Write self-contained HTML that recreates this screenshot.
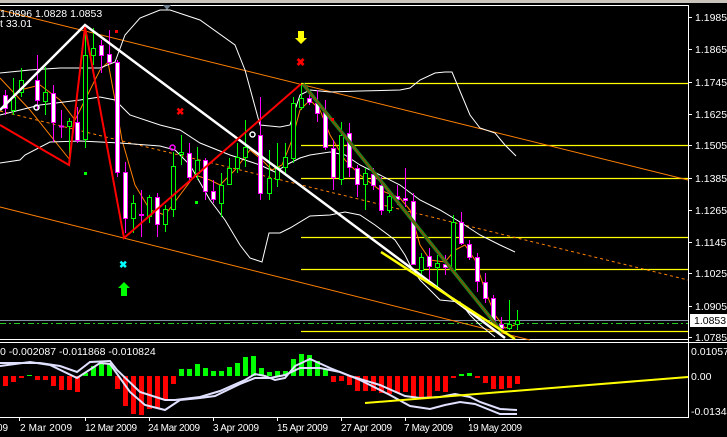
<!DOCTYPE html>
<html><head><meta charset="utf-8"><style>
html,body{margin:0;padding:0;background:#000;}
body{width:727px;height:437px;overflow:hidden;position:relative;font-family:"Liberation Sans",sans-serif;}
svg{position:absolute;left:0;top:0;}
text{font-family:"Liberation Sans",sans-serif;font-size:10.5px;fill:#fff;}
</style></head><body>
<svg width="727" height="437" viewBox="0 0 727 437" xmlns="http://www.w3.org/2000/svg">
<rect width="727" height="437" fill="#000"/>
<rect x="0" y="0" width="727" height="3" fill="#c8c4bc"/>
<line x1="0" y1="5.5" x2="688" y2="5.5" stroke="#fff"/>
<line x1="688.5" y1="5" x2="688.5" y2="418" stroke="#fff"/>
<line x1="0" y1="339.5" x2="688" y2="339.5" stroke="#fff"/>
<line x1="0" y1="342.5" x2="727" y2="342.5" stroke="#fff"/>
<line x1="0" y1="417.5" x2="688" y2="417.5" stroke="#fff"/>
<polygon points="163,5 171,5 167,10" fill="#708090"/>

<g stroke="#ffff00" stroke-width="1.2">
<line x1="301" y1="83.5" x2="688" y2="83.5"/>
<line x1="301" y1="145.5" x2="688" y2="145.5"/>
<line x1="301" y1="178.5" x2="688" y2="178.5"/>
<line x1="301" y1="237.5" x2="688" y2="237.5"/>
<line x1="301" y1="269.5" x2="688" y2="269.5"/>
<line x1="301" y1="331.5" x2="688" y2="331.5"/>
</g>
<line x1="0" y1="320.5" x2="688" y2="320.5" stroke="#8090a0"/>
<line x1="0" y1="323.5" x2="688" y2="323.5" stroke="#22cc22" stroke-dasharray="6,3,2,3"/>

<g stroke="#ff8000" stroke-width="1" fill="none">
<line x1="0" y1="10" x2="688" y2="180"/>
<line x1="0" y1="207" x2="530" y2="340"/>
<line x1="0" y1="111" x2="688" y2="280" stroke-dasharray="3,3"/>
<polyline points="0,78 30,110 70,160"/>
<polyline points="0,110 20,90 40,85 60,100 75,120 85,100 100,70 108,62 115,100 122,140 135,185 150,210 165,215 180,195 195,175 210,180 220,185 235,170 250,150 262,160 272,170 282,165 292,140 300,110 310,100 320,110 330,135 345,160 360,175 380,190 400,198 410,210 420,245 430,260 445,262 455,250 465,245 475,260 485,290 495,315 505,328 515,325"/>
</g>

<g stroke="#fff" stroke-width="1" fill="none">
<polyline points="0,73 30,70 60,68 100,68 115,62 125,35 140,18 160,10 170,10 200,20 235,45 245,70 260,125 280,127 290,125 300,95 310,90 330,92 360,91 400,90 410,88 420,80 435,73 445,72 452,72 470,115 480,128 495,133 505,145 516,156"/>
<polyline points="0,115 20,110 40,105 80,100 100,97 115,100 130,115 160,125 180,130 200,143 230,155 260,165 275,172 290,163 300,158 310,155 330,152 345,155 360,165 380,175 400,185 420,200 440,210 460,222 480,235 500,245 515,252"/>
<polyline points="0,163 20,160 25,155 50,142 80,141 100,142 120,143 160,146 175,150 190,165 210,200 225,220 240,245 250,258 262,262 269,233 280,233 290,228 310,216 330,215 345,212 360,215 375,225 395,240 405,255 410,265 420,280 440,300 460,302 470,315 480,325 495,337"/>
</g>

<g stroke-width="1">
<g stroke="#ff00ff">
<line x1="5.5" y1="90" x2="5.5" y2="115"/><line x1="37.5" y1="55" x2="37.5" y2="110"/><line x1="53.5" y1="85" x2="53.5" y2="142"/><line x1="61.5" y1="110" x2="61.5" y2="138"/><line x1="77.5" y1="107" x2="77.5" y2="143"/><line x1="101.5" y1="40" x2="101.5" y2="73"/><line x1="109.5" y1="30" x2="109.5" y2="65"/><line x1="117.5" y1="60" x2="117.5" y2="177"/><line x1="125.5" y1="162" x2="125.5" y2="233"/><line x1="141.5" y1="190" x2="141.5" y2="237"/><line x1="157.5" y1="193" x2="157.5" y2="237"/><line x1="189.5" y1="143" x2="189.5" y2="183"/><line x1="205.5" y1="158" x2="205.5" y2="200"/><line x1="213.5" y1="180" x2="213.5" y2="203"/><line x1="260.5" y1="97" x2="260.5" y2="200"/><line x1="309.5" y1="92" x2="309.5" y2="105"/><line x1="317.5" y1="90" x2="317.5" y2="122"/><line x1="325.5" y1="100" x2="325.5" y2="150"/><line x1="333.5" y1="140" x2="333.5" y2="190"/><line x1="349.5" y1="123" x2="349.5" y2="177"/><line x1="357.5" y1="165" x2="357.5" y2="197"/><line x1="373.5" y1="168" x2="373.5" y2="190"/><line x1="381.5" y1="177" x2="381.5" y2="215"/><line x1="397.5" y1="185" x2="397.5" y2="205"/><line x1="405.5" y1="168" x2="405.5" y2="207"/><line x1="413.5" y1="193" x2="413.5" y2="265"/><line x1="429.5" y1="248" x2="429.5" y2="280"/><line x1="445.5" y1="255" x2="445.5" y2="275"/><line x1="461.5" y1="212" x2="461.5" y2="245"/><line x1="469.5" y1="240" x2="469.5" y2="260"/><line x1="477.5" y1="253" x2="477.5" y2="292"/><line x1="485.5" y1="273" x2="485.5" y2="303"/><line x1="493.5" y1="295" x2="493.5" y2="326"/><line x1="501.5" y1="317" x2="501.5" y2="332"/>
</g>
<g stroke="#00ff00">
<line x1="13.5" y1="78" x2="13.5" y2="115"/><line x1="21.5" y1="68" x2="21.5" y2="97"/><line x1="45.5" y1="67" x2="45.5" y2="115"/><line x1="69.5" y1="118" x2="69.5" y2="158"/><line x1="85.5" y1="27" x2="85.5" y2="148"/><line x1="93.5" y1="28" x2="93.5" y2="65"/><line x1="133.5" y1="195" x2="133.5" y2="233"/><line x1="149.5" y1="195" x2="149.5" y2="223"/><line x1="165.5" y1="205" x2="165.5" y2="232"/><line x1="173.5" y1="152" x2="173.5" y2="217"/><line x1="181.5" y1="135" x2="181.5" y2="165"/><line x1="197.5" y1="147" x2="197.5" y2="180"/><line x1="221.5" y1="173" x2="221.5" y2="217"/><line x1="229.5" y1="158" x2="229.5" y2="185"/><line x1="237.5" y1="143" x2="237.5" y2="173"/><line x1="245.5" y1="120" x2="245.5" y2="167"/><line x1="269.5" y1="150" x2="269.5" y2="200"/><line x1="277.5" y1="143" x2="277.5" y2="187"/><line x1="285.5" y1="143" x2="285.5" y2="173"/><line x1="293.5" y1="97" x2="293.5" y2="163"/><line x1="301.5" y1="85" x2="301.5" y2="110"/><line x1="341.5" y1="122" x2="341.5" y2="185"/><line x1="365.5" y1="168" x2="365.5" y2="210"/><line x1="389.5" y1="190" x2="389.5" y2="213"/><line x1="421.5" y1="253" x2="421.5" y2="280"/><line x1="437.5" y1="255" x2="437.5" y2="287"/><line x1="453.5" y1="215" x2="453.5" y2="272"/><line x1="509.5" y1="300" x2="509.5" y2="330"/><line x1="517.5" y1="310" x2="517.5" y2="330"/>
</g>
<g fill="#fff" stroke="#ff00ff">
<rect x="3.5" y="95.5" width="4" height="13"/><rect x="35.5" y="80.5" width="4" height="20"/><rect x="51.5" y="93.5" width="4" height="29"/><rect x="59.5" y="126" width="4" height="1"/><rect x="75.5" y="122.5" width="4" height="18"/><rect x="99.5" y="45.5" width="4" height="10"/><rect x="107.5" y="54.5" width="4" height="8"/><rect x="115.5" y="62.5" width="4" height="110"/><rect x="123.5" y="172.5" width="4" height="46"/><rect x="139.5" y="214.5" width="4" height="1"/><rect x="155.5" y="197.5" width="4" height="27"/><rect x="187.5" y="153.5" width="4" height="24"/><rect x="203.5" y="160.5" width="4" height="31"/><rect x="211.5" y="191.5" width="4" height="8"/><rect x="258.5" y="135.5" width="4" height="58"/><rect x="307.5" y="98.5" width="4" height="4"/><rect x="315.5" y="103.5" width="4" height="10"/><rect x="323.5" y="112.5" width="4" height="35"/><rect x="331.5" y="148.5" width="4" height="29"/><rect x="347.5" y="133.5" width="4" height="34"/><rect x="355.5" y="168.5" width="4" height="16"/><rect x="371.5" y="174.5" width="4" height="11"/><rect x="379.5" y="185.5" width="4" height="25"/><rect x="395.5" y="196.5" width="4" height="3"/><rect x="403.5" y="198.5" width="4" height="2"/><rect x="411.5" y="201.5" width="4" height="63"/><rect x="427.5" y="256.5" width="4" height="10"/><rect x="443.5" y="264.5" width="4" height="3"/><rect x="459.5" y="222.5" width="4" height="21"/><rect x="467.5" y="244.5" width="4" height="13"/><rect x="475.5" y="257.5" width="4" height="24"/><rect x="483.5" y="282.5" width="4" height="16"/><rect x="491.5" y="298.5" width="4" height="24"/><rect x="499.5" y="324.5" width="4" height="4"/>
</g>
<g fill="#000" stroke="#00ff00">
<rect x="11.5" y="97.5" width="4" height="13"/><rect x="19.5" y="80.5" width="4" height="12"/><rect x="43.5" y="92.5" width="4" height="9"/><rect x="67.5" y="121.5" width="4" height="5"/><rect x="83.5" y="55.5" width="4" height="84"/><rect x="91.5" y="48.5" width="4" height="7"/><rect x="131.5" y="203.5" width="4" height="15"/><rect x="147.5" y="197.5" width="4" height="19"/><rect x="163.5" y="209.5" width="4" height="15"/><rect x="171.5" y="166.5" width="4" height="43"/><rect x="179.5" y="152.5" width="4" height="2"/><rect x="195.5" y="160.5" width="4" height="13"/><rect x="219.5" y="185.5" width="4" height="18"/><rect x="227.5" y="168.5" width="4" height="16"/><rect x="235.5" y="157.5" width="4" height="11"/><rect x="243.5" y="147.5" width="4" height="10"/><rect x="267.5" y="178.5" width="4" height="15"/><rect x="275.5" y="167.5" width="4" height="12"/><rect x="283.5" y="157.5" width="4" height="10"/><rect x="291.5" y="103.5" width="4" height="55"/><rect x="299.5" y="98.5" width="4" height="9"/><rect x="339.5" y="135.5" width="4" height="44"/><rect x="363.5" y="173.5" width="4" height="11"/><rect x="387.5" y="196.5" width="4" height="14"/><rect x="419.5" y="257.5" width="4" height="13"/><rect x="435.5" y="263.5" width="4" height="4"/><rect x="451.5" y="222.5" width="4" height="48"/><rect x="507.5" y="324.5" width="4" height="4"/><rect x="515.5" y="320.5" width="4" height="4"/>
</g>
</g>

<polyline points="0,110 85,25 505,338" stroke="#fff" stroke-width="2.5" fill="none"/>
<polyline points="0,125 69,165 85,27 124,238 301,84" stroke="#ff0000" stroke-width="2" fill="none"/>
<line x1="303" y1="84" x2="502" y2="332" stroke="#1a8a1a" stroke-width="3.5"/>
<line x1="303" y1="84" x2="502" y2="332" stroke="#cc2200" stroke-width="0.8"/>
<line x1="381" y1="252" x2="515" y2="339" stroke="#ffff00" stroke-width="2.5"/>

<polygon points="298,31 304,31 304,38 307,38 301,44 295,38 298,38" fill="#ffff00"/>
<text x="296" y="66" style="fill:#ff0000;font-size:11px;font-weight:bold">✖</text>
<text x="176" y="115" style="fill:#ff0000;font-size:10px;font-weight:bold">✖</text>
<text x="119" y="268" style="fill:#00ffff;font-size:10px;font-weight:bold">✖</text>
<polygon points="124,282 130,288 127,288 127,296 121,296 121,288 118,288" fill="#00ff00"/>
<rect x="115" y="30" width="3" height="3" fill="#ff0000"/>
<rect x="84" y="172" width="3" height="3" fill="#00ff00"/>
<rect x="195" y="201" width="3" height="3" fill="#00ff00"/>
<rect x="331" y="118" width="3" height="3" fill="#ff0000"/>
<circle cx="36.5" cy="107.5" r="2.5" stroke="#fff" stroke-width="1.5" fill="none"/>
<circle cx="252.5" cy="134.5" r="2.5" stroke="#fff" stroke-width="1.5" fill="none"/>
<circle cx="172.5" cy="147.5" r="2.5" stroke="#ff00ff" stroke-width="1.5" fill="none"/>

<text x="0" y="17">1.0896 1.0828 1.0853</text>
<text x="0" y="27">t 33.01</text>

<g>
<line x1="688" y1="17.5" x2="692" y2="17.5" stroke="#fff"/><text x="695" y="21">1.1985</text>
<line x1="688" y1="49.5" x2="692" y2="49.5" stroke="#fff"/><text x="695" y="53">1.1865</text>
<line x1="688" y1="82.5" x2="692" y2="82.5" stroke="#fff"/><text x="695" y="86">1.1745</text>
<line x1="688" y1="114.5" x2="692" y2="114.5" stroke="#fff"/><text x="695" y="118">1.1625</text>
<line x1="688" y1="145.5" x2="692" y2="145.5" stroke="#fff"/><text x="695" y="149">1.1505</text>
<line x1="688" y1="178.5" x2="692" y2="178.5" stroke="#fff"/><text x="695" y="182">1.1385</text>
<line x1="688" y1="210.5" x2="692" y2="210.5" stroke="#fff"/><text x="695" y="214">1.1265</text>
<line x1="688" y1="242.5" x2="692" y2="242.5" stroke="#fff"/><text x="695" y="246">1.1145</text>
<line x1="688" y1="273.5" x2="692" y2="273.5" stroke="#fff"/><text x="695" y="277">1.1025</text>
<line x1="688" y1="306.5" x2="692" y2="306.5" stroke="#fff"/><text x="695" y="310">1.0905</text>
<rect x="690" y="314" width="37" height="13" fill="#fff"/><text x="694" y="324" style="fill:#000">1.0853</text>
<line x1="688" y1="337.5" x2="692" y2="337.5" stroke="#fff"/><text x="695" y="341">1.0785</text>
<text x="691" y="355">0.010577</text>
<text x="691" y="380">0.00</text>
<text x="691" y="415">-0.013448</text>
</g>

<g fill="#ff0000">
<rect x="3" y="376" width="5" height="10"/><rect x="11" y="376" width="5" height="6"/><rect x="19" y="376" width="5" height="2"/><rect x="35" y="376" width="5" height="4"/><rect x="43" y="376" width="5" height="4"/><rect x="51" y="376" width="5" height="10"/><rect x="59" y="376" width="5" height="14"/><rect x="67" y="376" width="5" height="14"/><rect x="75" y="376" width="5" height="16"/><rect x="115" y="376" width="5" height="13"/><rect x="123" y="376" width="5" height="30"/><rect x="131" y="376" width="5" height="38"/><rect x="139" y="376" width="5" height="39"/><rect x="147" y="376" width="5" height="33"/><rect x="155" y="376" width="5" height="32"/><rect x="163" y="376" width="5" height="23"/><rect x="171" y="376" width="5" height="8"/>
<rect x="331" y="376" width="5" height="6"/><rect x="339" y="376" width="5" height="5"/><rect x="347" y="376" width="5" height="9"/><rect x="355" y="376" width="5" height="15"/><rect x="363" y="376" width="5" height="15"/><rect x="371" y="376" width="5" height="15"/><rect x="379" y="376" width="5" height="17"/><rect x="387" y="376" width="5" height="18"/><rect x="395" y="376" width="5" height="17"/><rect x="403" y="376" width="5" height="16"/><rect x="411" y="376" width="5" height="22"/><rect x="419" y="376" width="5" height="22"/><rect x="427" y="376" width="5" height="22"/><rect x="435" y="376" width="5" height="15"/><rect x="443" y="376" width="5" height="16"/><rect x="451" y="376" width="5" height="2"/><rect x="475" y="376" width="5" height="2"/><rect x="483" y="376" width="5" height="7"/><rect x="491" y="376" width="5" height="13"/><rect x="499" y="376" width="5" height="13"/><rect x="507" y="376" width="5" height="12"/><rect x="515" y="376" width="5" height="8"/>
</g>
<g fill="#00ff00">
<rect x="27" y="375" width="5" height="1"/><rect x="83" y="373" width="5" height="3"/><rect x="91" y="366" width="5" height="10"/><rect x="99" y="363" width="5" height="13"/><rect x="107" y="364" width="5" height="12"/>
<rect x="179" y="369" width="5" height="7"/><rect x="187" y="369" width="5" height="7"/><rect x="195" y="364" width="5" height="12"/><rect x="203" y="368" width="5" height="8"/><rect x="211" y="371" width="5" height="5"/><rect x="219" y="371" width="5" height="5"/><rect x="227" y="367" width="5" height="9"/><rect x="235" y="363" width="5" height="13"/><rect x="243" y="357" width="5" height="19"/><rect x="251" y="356" width="5" height="20"/><rect x="259" y="368" width="5" height="8"/><rect x="267" y="372" width="5" height="4"/><rect x="275" y="371" width="5" height="5"/><rect x="283" y="371" width="5" height="5"/><rect x="291" y="359" width="5" height="17"/><rect x="299" y="354" width="5" height="22"/><rect x="307" y="355" width="5" height="21"/><rect x="315" y="361" width="5" height="15"/><rect x="323" y="369" width="5" height="7"/><rect x="459" y="374" width="5" height="2"/><rect x="467" y="373" width="5" height="3"/>
</g>
<g stroke="#e0e0ff" stroke-width="2" fill="none">
<polyline points="0,363 40,363 60,366 77,372 90,362 110,361 117,370 140,392 165,400 175,400 200,397 220,391 245,380 255,374 265,376 275,380 285,378 295,366 310,359 330,368 350,376 380,385 405,396 420,398 440,397 455,394 470,397 480,402 500,409 517,410"/>
<polyline points="0,366 30,362 50,365 77,378 100,363 110,364 130,392 145,405 165,410 180,400 200,398 215,396 240,384 255,378 270,378 285,375 300,368 320,368 340,372 360,380 390,395 410,406 430,409 445,405 460,402 475,404 490,410 500,414 517,414"/>
</g>
<line x1="365" y1="403" x2="688" y2="377" stroke="#ffff00" stroke-width="2"/>
<text x="0" y="355">0 -0.002087 -0.011868 -0.010824</text>

<g stroke="#fff">
<line x1="19.5" y1="418" x2="19.5" y2="421"/><line x1="85.5" y1="418" x2="85.5" y2="421"/><line x1="149.5" y1="418" x2="149.5" y2="421"/><line x1="213.5" y1="418" x2="213.5" y2="421"/><line x1="277.5" y1="418" x2="277.5" y2="421"/><line x1="341.5" y1="418" x2="341.5" y2="421"/><line x1="405.5" y1="418" x2="405.5" y2="421"/><line x1="469.5" y1="418" x2="469.5" y2="421"/>
</g>
<g style="font-size:10px">
<text x="-3" y="431" style="font-size:10px">09</text>
<text x="20" y="431" style="font-size:10px" textLength="52">2 Mar 2009</text>
<text x="85" y="431" style="font-size:10px" textLength="52">12 Mar 2009</text>
<text x="148" y="431" style="font-size:10px" textLength="52">24 Mar 2009</text>
<text x="213" y="431" style="font-size:10px" textLength="46">3 Apr 2009</text>
<text x="277" y="431" style="font-size:10px" textLength="51">15 Apr 2009</text>
<text x="341" y="431" style="font-size:10px" textLength="51">27 Apr 2009</text>
<text x="404" y="431" style="font-size:10px" textLength="49">7 May 2009</text>
<text x="468" y="431" style="font-size:10px" textLength="54">19 May 2009</text>
</g>
</svg>
</body></html>
